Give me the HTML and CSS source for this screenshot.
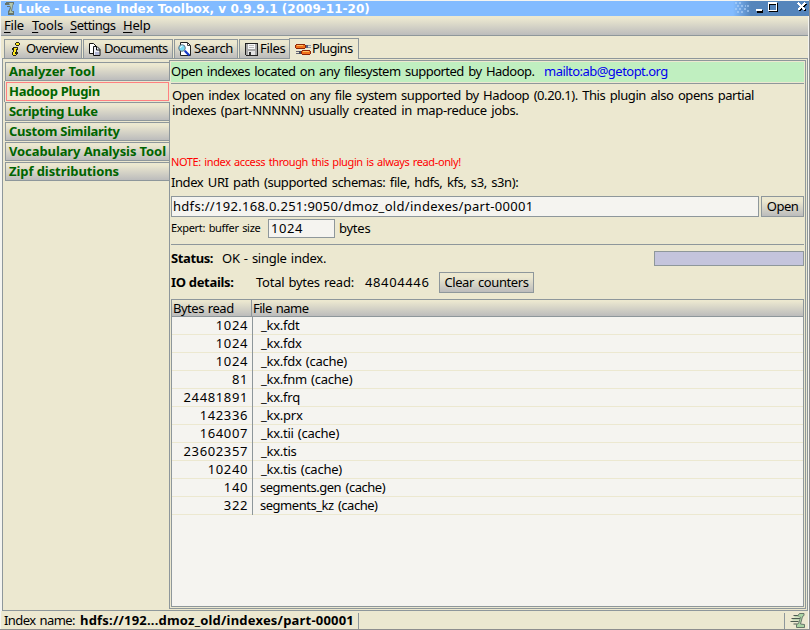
FILE: index.html
```html
<!DOCTYPE html>
<html lang="en">
<head>
<meta charset="utf-8">
<title>Luke - Lucene Index Toolbox</title>
<link rel="stylesheet" href="styles.css">
</head>
<body>
<div class="window">
  <header class="titlebar">
    <svg class="app-icon" width="13" height="15" viewBox="0 0 13 15">
      <path d="M2 1h8v2l-1 1-1 6h2v4H4v-4l1-1 1-3H3V5h3V4H1V2h1z" fill="#66746c"/>
      <path d="M5 2h4l-2 8 2 1v1H5l2-5z" fill="#b4c8ac"/>
    </svg>
    <h1 class="title">Luke - Lucene Index Toolbox, v 0.9.9.1 (2009-11-20)</h1>
    <div class="window-controls">
      <svg width="76" height="15" viewBox="0 0 76 15" shape-rendering="crispEdges">
        <g fill="#b3d3fa">
          <path d="M2 1h2v2H2zM6 1h2v2H6zM4 4h2v2H4zM8 4h2v2H8zM2 7h2v2H2zM6 7h2v2H6zM12 4h1v2h-1zM4 10h2v2H4zM8 10h2v2H8zM14 4h2v2h-2zM11 7h2v2h-2zM14 9h2v2h-2z" opacity=".6"/>
        </g>
        <path d="M24 9h6v3h-6z" fill="#000"/><path d="M23 8h6v2h-6z" fill="#fff"/>
        <path d="M36 2h9v9H36zM37 4v6h7V4z" fill="#000" fill-rule="evenodd"/>
        <path d="M35 1h9v9H35zM36 3v6h7V3z" fill="#fff" fill-rule="evenodd"/>
        <path d="M66 3l7 7M73 3l-7 7" stroke="#000" stroke-width="2.4"/>
        <path d="M65 2l7 7M72 2l-7 7" stroke="#fff" stroke-width="2"/>
      </svg>
    </div>
  </header>

  <nav class="menubar">
    <span class="menu-file"><u>F</u>ile</span>
    <span class="menu-tools"><u>T</u>ools</span>
    <span class="menu-settings"><u>S</u>ettings</span>
    <span class="menu-help"><u>H</u>elp</span>
  </nav>

  <div class="tabs">
    <div class="tab tab-overview">
      <svg width="16" height="16" viewBox="0 0 16 16" shape-rendering="crispEdges">
        <path d="M9 1h3v1h1v2h-1v1H9V4H8V2h1zM6 6h5v3h-1v2h1v2h-1v1H9v1H6v-1H5v-3h1V9H5V7h1z" fill="#2a2a18"/>
        <path d="M9 2h3v2H9zM7 7h3v1H9v3H8v2h1v1H6v-3h1V8H6z" fill="#ffe81c"/>
      </svg><span>Overview</span>
    </div>
    <div class="tab tab-documents">
      <svg width="14" height="15" viewBox="0 0 14 15">
        <path d="M1.500 1.500h4l3 3v7h-7z" fill="#fff" stroke="#111"/>
        <path d="M5.500 4.500h3.500l3 3v6H5.500z" fill="#eef0fa" stroke="#111"/>
        <path d="M8.500 5v3H12" fill="none" stroke="#111"/>
        <path d="M7 10h4v3H7z" fill="#b4b9d8"/>
      </svg><span>Documents</span>
    </div>
    <div class="tab tab-search">
      <svg width="16" height="16" viewBox="0 0 16 16">
        <path d="M3.500 1.500h7l3 3v10h-10z" fill="#fff" stroke="#222"/>
        <path d="M10.500 1.500v3h3" fill="none" stroke="#444"/>
        <circle cx="5" cy="7" r="3.300" fill="#79dcf5" stroke="#678" stroke-width="1"/>
        <path d="M3.500 7a2 2 0 0 1 2-2" stroke="#fff" fill="none"/>
        <path d="M7.800 9.800l4.500 4.700" stroke="#1438c8" stroke-width="2.300"/>
      </svg><span>Search</span>
    </div>
    <div class="tab tab-files">
      <svg width="15" height="15" viewBox="0 0 15 15" shape-rendering="crispEdges">
        <path d="M1 1h13v13H2v-1H1z" fill="#222"/>
        <path d="M2 2h11v11H2z" fill="#a8a8a8"/>
        <path d="M4 2h7v5H4z" fill="#f8f8f8"/><path d="M5 3h5v1H5zM5 5h5v1H5z" fill="#bbb"/>
        <path d="M4 9h7v4H4z" fill="#e4e4e4"/><path d="M5 10h2v3H5z" fill="#333"/>
      </svg><span>Files</span>
    </div>
    <div class="tab tab-plugins selected">
      <svg width="17" height="13" viewBox="0 0 17 13" shape-rendering="crispEdges">
        <path d="M1 1h9v1h1v3h-1v1H1V5H0V2h1z" fill="#8d2408"/>
        <path d="M1 2h9v3H1z" fill="#f0701c"/><path d="M2 2h6v1H2z" fill="#ffc060"/>
        <path d="M11 2h2v3h-2z" fill="#556080"/><path d="M13 2h3v1h-3zM13 4h3v1h-3z" fill="#8c98b4"/>
        <path d="M7 7h8v1h1v3h-1v1H7v-1H6V8h1z" fill="#8d2408"/>
        <path d="M7 8h8v3H7z" fill="#f0701c"/><path d="M8 8h6v1H8z" fill="#ffc060"/>
        <path d="M4 8h2v3H4z" fill="#444c5c"/><path d="M1 8h3v1H1zM1 10h3v1H1z" fill="#667"/>
      </svg><span>Plugins</span>
    </div>
  </div>

  <main class="pane">
    <aside class="plugins">
      <div class="plugin p-analyzer">Analyzer Tool</div>
      <div class="plugin p-hadoop current">Hadoop Plugin</div>
      <div class="plugin p-scripting">Scripting Luke</div>
      <div class="plugin p-similarity">Custom Similarity</div>
      <div class="plugin p-vocabulary">Vocabulary Analysis Tool</div>
      <div class="plugin p-zipf">Zipf distributions</div>
    </aside>

    <section class="content">
      <div class="banner"><span class="summary">Open indexes located on any filesystem supported by Hadoop.</span><a class="mail">mailto:ab@getopt.org</a></div>
      <div class="description">
        <p class="desc-1">Open index located on any file system supported by Hadoop (0.20.1). This plugin also opens partial</p>
        <p class="desc-2">indexes (part-NNNNN) usually created in map-reduce jobs.</p>
      </div>
      <p class="note">NOTE: index access through this plugin is always read-only!</p>
      <p class="uri-label">Index URI path (supported schemas: file, hdfs, kfs, s3, s3n):</p>
      <div class="uri-row">
        <div class="field uri">hdfs://192.168.0.251:9050/dmoz_old/indexes/part-00001</div>
        <div class="button open">Open</div>
      </div>
      <div class="expert-row">
        <span class="expert">Expert: buffer size</span>
        <div class="field buffer">1024</div>
        <span class="unit">bytes</span>
      </div>
      <div class="status-row">
        <b class="status-label">Status:</b><span class="status">OK - single index.</span>
        <div class="progress"></div>
      </div>
      <div class="io-row">
        <b class="io-label">IO details:</b><span class="total">Total bytes read:</span><span class="count">48404446</span>
        <div class="button clear">Clear counters</div>
      </div>
      <div class="table">
        <div class="thead"><div class="th bytes-head">Bytes read</div><div class="th name-head">File name</div></div>
        <div class="tr"><div class="num">1024</div><div class="name">_kx.fdt</div></div>
        <div class="tr"><div class="num">1024</div><div class="name">_kx.fdx</div></div>
        <div class="tr"><div class="num">1024</div><div class="name">_kx.fdx (cache)</div></div>
        <div class="tr"><div class="num">81</div><div class="name">_kx.fnm (cache)</div></div>
        <div class="tr"><div class="num">24481891</div><div class="name">_kx.frq</div></div>
        <div class="tr"><div class="num">142336</div><div class="name">_kx.prx</div></div>
        <div class="tr"><div class="num">164007</div><div class="name">_kx.tii (cache)</div></div>
        <div class="tr"><div class="num">23602357</div><div class="name">_kx.tis</div></div>
        <div class="tr"><div class="num">10240</div><div class="name">_kx.tis (cache)</div></div>
        <div class="tr"><div class="num">140</div><div class="name segments">segments.gen (cache)</div></div>
        <div class="tr"><div class="num">322</div><div class="name segments">segments_kz (cache)</div></div>
      </div>
    </section>
  </main>

  <footer class="statusbar">
    <span class="index-label">Index name:</span><b class="index-name">hdfs://192...dmoz_old/indexes/part-00001</b>
    <svg class="logo" width="16" height="16" viewBox="0 0 16 16">
      <path d="M3 2.500h8M1 5.500h9M0 8.500h8M3 11h4" fill="none" stroke="#4c5a50" stroke-width="1.200"/>
      <path d="M9 .5h4.500v2l-1.500 1-2 7.500 4 .5v3H6v-3l2-1 2-6.500-3-1z" fill="#a9d3a3" stroke="#5c6b60" stroke-width=".9"/>
      <path d="M4 3.800h6M2 6.800h7" stroke="#a9cfa3"/>
    </svg>
  </footer>
</div>
</body>
</html>
```
FILE: styles.css
```css
* { box-sizing: border-box; }
body {
  margin: 0;
  background: #fff;
  color: #000;
  font: 13px/18px "Noto Sans", sans-serif;
  white-space: nowrap;
}
h1, p { margin: 0; }
.window {
  width: 810px;
  height: 630px;
  padding: 1px 0 0 1px;
  border-right: 1px solid #8e8e8e;
  border-bottom: 1px solid #8e8e8e;
  display: flex;
  flex-direction: column;
  background: #f4f4f0;
  overflow: hidden;
}

/* Title bar */
.titlebar {
  height: 15px;
  flex: none;
  display: flex;
  background: #82bbff;
}
.app-icon { margin-left: 3px; }
.title {
  margin-left: 1px;
  font: bold 12px/17px "DejaVu Sans", sans-serif;
  letter-spacing: 0.02px;
  color: #fff;
}
.window-controls {
  width: 76px;
  height: 15px;
  margin-left: auto;
  background: linear-gradient(90deg, #82bbff 0, #5585bb 18px);
}
.window-controls svg { display: block; }

/* Menu */
.menubar {
  height: 20px;
  flex: none;
  margin-right: 1px;
  padding-left: 3px;
  display: flex;
  line-height: 18px;
  background: linear-gradient(#ece8d0 2px, #bcbcbc);
  border-bottom: 1px solid #8e979b;
}
.menubar u { text-underline-offset: 2px; }
.menu-file { width: 28px; letter-spacing: -0.2px; }
.menu-tools { width: 38px; letter-spacing: -0.1px; }
.menu-settings { width: 53px; letter-spacing: -0.5px; }
.menu-help { letter-spacing: -0.2px; }

/* Main tabs */
.tabs {
  height: 22px;
  flex: none;
  margin-right: 1px;
  padding-left: 3px;
  display: flex;
  align-items: flex-end;
  background: #ece8d0;
}
.tab {
  height: 19px;
  margin-right: 1px;
  display: flex;
  align-items: center;
  border: 1px solid #8e979b;
  border-bottom: 0;
  background: linear-gradient(#ece8d0 3px, #bcbcbc);
}
.tab svg { flex: none; }
.tab span { position: relative; top: -1px; }
.tab-overview { width: 78px; padding-left: 2px; letter-spacing: -0.6px; }
.tab-overview span { margin-left: 3px; }
.tab-documents { width: 90px; padding-left: 4px; letter-spacing: -0.72px; }
.tab-documents span { margin-left: 2px; }
.tab-search { width: 64px; padding-left: 2px; letter-spacing: -0.35px; }
.tab-search span { margin-left: 1px; }
.tab-files { width: 51px; margin-right: 0; padding-left: 4px; letter-spacing: -0.35px; }
.tab-files span { margin-left: 1px; }
.tab.selected {
  width: 70px;
  height: 21px;
  margin: 0 0 -1px -1px;
  padding-left: 5px;
  background: #ece8d0;
  letter-spacing: -0.62px;
  position: relative;
}
.tab-plugins span { margin-left: 0; }

/* Body */
.pane {
  height: 553px;
  flex: none;
  margin: 0 1px 0 1px;
  display: grid;
  grid-template-columns: 166px 637px;
  padding: 1px 1px 1px 0;
  border: 1px solid #8e979b;
  background: #ece8d0;
}
.plugins {
  padding: 2px 0 0 2px;
  display: flex;
  flex-direction: column;
  gap: 1px;
}
.plugin {
  height: 19px;
  padding-left: 3px;
  border: 1px solid #8e979b;
  border-right: 0;
  background: linear-gradient(#ece8d0 2px, #bcbcbc);
  color: #006400;
  font-weight: bold;
  line-height: 17px;
}
.plugin.current {
  height: 21px;
  width: 166px;
  margin: -1px 0 -1px -1px;
  padding: 0 0 0 4px;
  border: 1px solid #8e979b;
  border-width: 0 0 0 1px;
  background: #ece8d0;
  position: relative;
  line-height: 21px;
}
.plugin.current::after {
  content: "";
  position: absolute;
  inset: 1px;
  border: 1px solid #ff8080;
}
.p-analyzer { letter-spacing: -0.05px; }
.p-hadoop { letter-spacing: -0.3px; }
.p-scripting { letter-spacing: -0.3px; }
.p-similarity { letter-spacing: -0.26px; }
.p-vocabulary { letter-spacing: -0.1px; }
.p-zipf { letter-spacing: -0.07px; }

.content {
  height: 549px;
  padding: 0 1px 1px 1px;
  border: 1px solid #8e979b;
  display: flex;
  flex-direction: column;
}
.banner {
  height: 20px;
  margin-top: 1px;
  flex: none;
  display: flex;
  line-height: 19px;
  background: #c0efc0;
}
.summary { width: 373px; letter-spacing: -0.51px; word-spacing: 1.5px; }
.mail { color: #00e; letter-spacing: -0.53px; }
.description {
  height: 71px;
  margin-top: 1px;
  padding: 4px 0 0 1px;
  border-top: 1px solid #8e979b;
  line-height: 15px;
}
.desc-1 { letter-spacing: -0.43px; word-spacing: 1.5px; }
.desc-2 { letter-spacing: -0.34px; word-spacing: 1.5px; }
.note {
  height: 16px;
  font-size: 11px;
  line-height: 16px;
  letter-spacing: -0.39px;
  word-spacing: 1px;
  color: #f00;
}
.uri-label { height: 26px; line-height: 25px; letter-spacing: -0.41px; word-spacing: 1.5px; }
.uri-row { display: flex; height: 21px; justify-content: space-between; }
.field {
  border: 1px solid #8e979b;
  background: #f5f4f0;
}
.uri { width: 588px; padding-left: 1px; line-height: 19px; letter-spacing: 0.295px; }
.button {
  border: 1px solid #8e979b;
  background: linear-gradient(#ece8d0 4px, #bcbcbc);
  text-align: center;
}
.open { width: 43px; line-height: 19px; letter-spacing: -0.5px; }
.expert-row { display: flex; height: 27px; padding-top: 2px; line-height: 19px; }
.expert { width: 97px; font-size: 11px; line-height: 18px; letter-spacing: -0.32px; word-spacing: 1px; }
.buffer { width: 67px; height: 19px; padding-left: 2px; line-height: 17px; letter-spacing: 0.6px; }
.unit { margin-left: 4px; letter-spacing: -0.25px; }
.status-row {
  height: 28px;
  border-top: 1px solid #8e979b;
  display: flex;
  line-height: 27px;
}
.status-label { width: 51px; letter-spacing: -0.4px; }
.status { letter-spacing: -0.25px; word-spacing: 1px; }
.progress {
  width: 150px;
  height: 15px;
  margin: 6px 0 0 auto;
  border: 1px solid #8e979b;
  background: #c4c4dc;
}
.io-row { height: 27px; display: flex; line-height: 20px; }
.io-label { width: 85px; letter-spacing: -0.32px; }
.total { width: 109px; letter-spacing: -0.25px; word-spacing: 1px; }
.count { width: 74px; letter-spacing: 0.62px; }
.clear { width: 95px; height: 21px; line-height: 19px; letter-spacing: -0.4px; word-spacing: 1px; }

/* Table */
.table {
  flex: 1;
  border: 1px solid #8e979b;
  background: #f5f4f0;
}
.thead {
  height: 17px;
  display: flex;
  border-bottom: 1px solid #8e979b;
  background: linear-gradient(#ece8d0 1px, #bcbcbc);
  line-height: 16px;
}
.th { padding-left: 1px; word-spacing: 1px; }
.bytes-head { width: 80px; border-right: 1px solid #8e979b; letter-spacing: -0.48px; }
.name-head { letter-spacing: -0.5px; }
.tr {
  height: 18px;
  display: grid;
  grid-template-columns: 81px 1fr;
  border-bottom: 1px solid #ece8d0;
  line-height: 17px;
}
.num {
  height: 18px;
  padding-right: 4px;
  border-right: 1px solid #8e979b;
  text-align: right;
  letter-spacing: 0.62px;
}
.name { padding-left: 8px; letter-spacing: -0.25px; word-spacing: 1px; }
.segments { padding-left: 7px; letter-spacing: -0.48px; word-spacing: 1.5px; }

/* Status bar */
.statusbar {
  flex: 1;
  display: flex;
  margin-right: 1px;
  padding: 1px 1px 1px 3px;
  background: #ece8d0;
  line-height: 17px;
}
.index-label { width: 76px; letter-spacing: -0.55px; word-spacing: 1px; }
.index-name {
  width: 279px;
  height: 16px;
  margin-top: 1px;
  border-right: 1px solid #8e979b;
  line-height: 15px;
  letter-spacing: 0.2px;
}
.logo {
  width: 23px;
  height: 16px;
  margin: 1px 0 0 auto;
  padding-left: 5px;
  border-left: 1px solid #8e979b;
}
```
